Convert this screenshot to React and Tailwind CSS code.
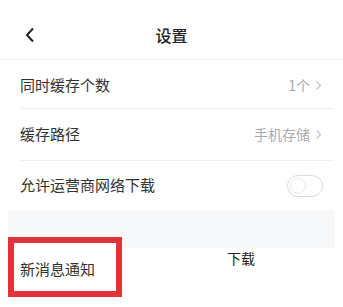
import React from "react";

const font = { fontFamily: '"Noto Sans CJK SC", "Noto Sans", sans-serif' };

function Chevron() {
  return (
    <svg width="7" height="11" viewBox="0 0 7 11" className="ml-[5px]">
      <path d="M1.5 1.5 L5.5 5.5 L1.5 9.5" fill="none" stroke="#c4c4c4" strokeWidth="1.2" />
    </svg>
  );
}

export default function App() {
  return (
    <div className="w-[343px] h-[307px] bg-white overflow-hidden relative font-['Noto_Sans_CJK_SC',sans-serif]" style={font}>
      {/* header */}
      <div className="h-[60px] pt-[10px] flex items-center relative border-b border-[#f3f3f3]">
        <svg width="10" height="16" viewBox="0 0 10 16" className="ml-[25px]">
          <path d="M8 1.5 L2 8 L8 14.5" fill="none" stroke="#222" strokeWidth="2" />
        </svg>
        <div className="absolute left-0 right-0 top-[10px] bottom-0 flex items-center justify-center pointer-events-none">
          <span className="text-[16px] text-[#222] font-medium">设置</span>
        </div>
      </div>

      {/* rows */}
      <div className="h-[48px] flex items-center justify-between pl-5 pr-[21px] pt-[2px]">
        <span className="text-[15px] text-[#333]">同时缓存个数</span>
        <div className="flex items-center">
          <span className="text-[14px] text-[#aaa]">1个</span>
          <Chevron />
        </div>
      </div>
      <div className="ml-5 mr-[10px] h-px bg-[#efefef]" />
      <div className="h-[51px] flex items-center justify-between pl-5 pr-[21px]">
        <span className="text-[15px] text-[#333]">缓存路径</span>
        <div className="flex items-center">
          <span className="text-[14px] text-[#aaa]">手机存储</span>
          <Chevron />
        </div>
      </div>
      <div className="ml-5 mr-[10px] h-px bg-[#efefef]" />
      <div className="h-[49px] flex items-center justify-between pl-5 pr-[20px]">
        <span className="text-[15px] text-[#333]">允许运营商网络下载</span>
        <div className="w-[36px] h-[22px] rounded-full border border-[#dcdcdc] bg-white flex items-center px-[2px]">
          <div className="w-[16px] h-[16px] rounded-full border border-[#e8e8e8]" />
        </div>
      </div>

      {/* lower collage area */}
      <div className="relative h-[97px]">
        <div className="mx-2 h-[38px] bg-[#f7f8fa]" />
        <div className="mx-2 h-[44px] bg-white" />
        <span className="absolute left-[227px] top-[38px] text-[14px] text-[#222]">下载</span>
        <div className="absolute left-[8px] top-[27px] w-[114px] h-[60px] border-[6px] border-[#e2333b] bg-white flex items-center pl-[6px] pt-[4px]">
          <span className="text-[15px] text-[#333]">新消息通知</span>
        </div>
      </div>
    </div>
  );
}
